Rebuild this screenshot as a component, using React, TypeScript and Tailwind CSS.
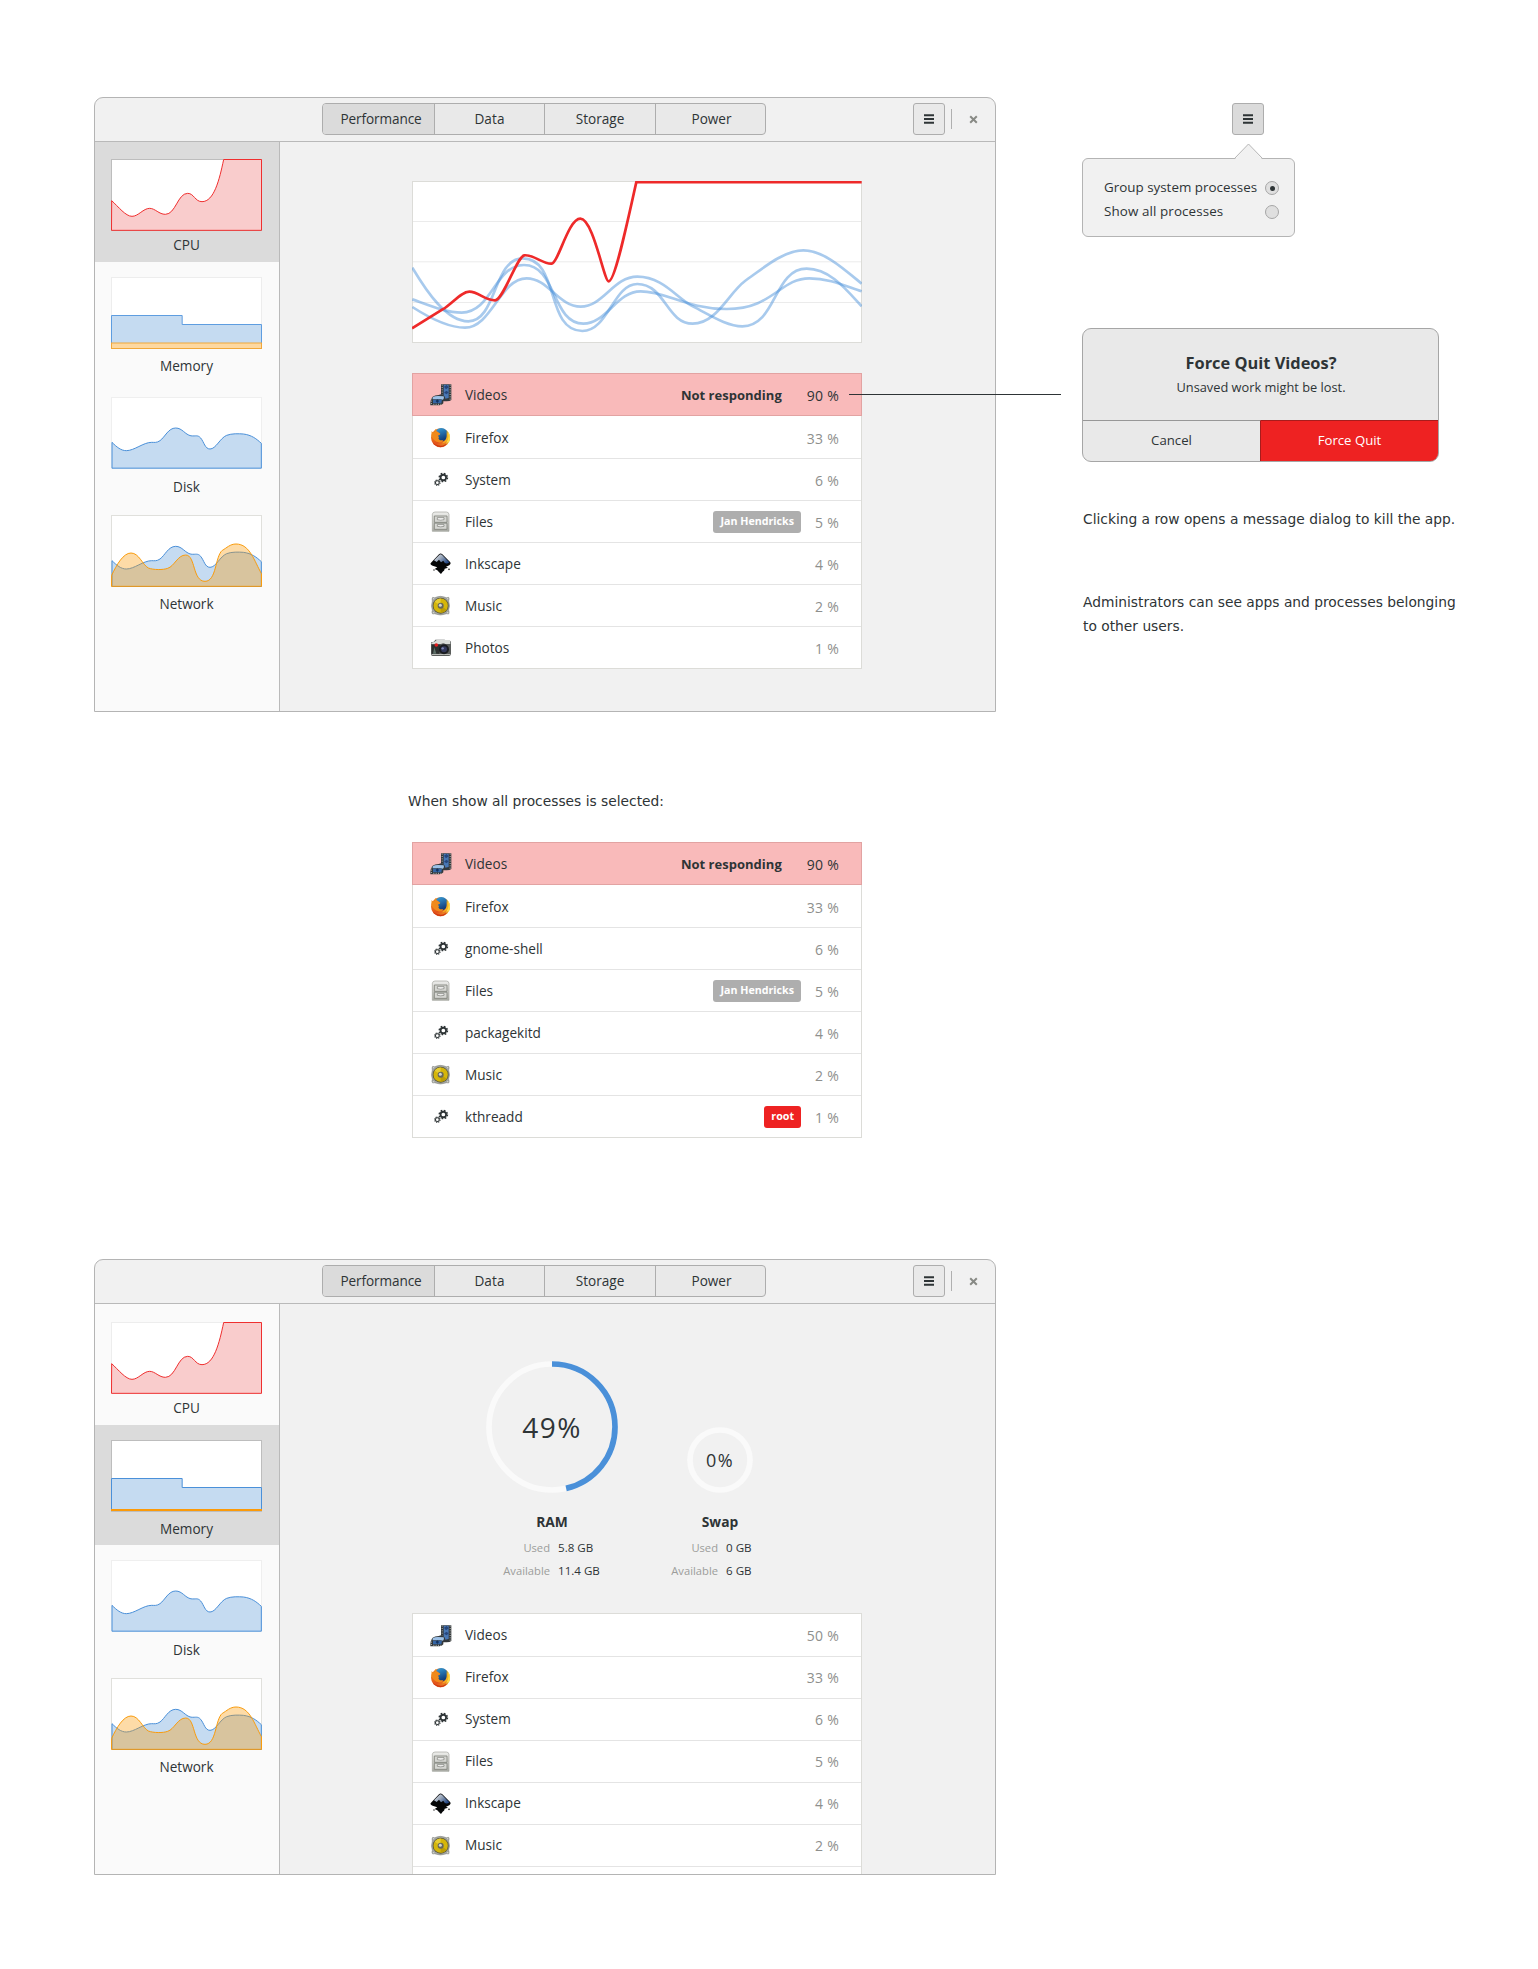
import type { ReactNode } from "react";

/* ---------- App icons (22px) ---------- */

function Icon({ children }: { children: ReactNode }) {
  return (
    <svg className="block h-[22px] w-[22px] shrink-0 overflow-visible" viewBox="0 0 66 66">
      {children}
    </svg>
  );
}

function VideosIcon() {
  return (
    <Icon>
      <path d="M33 1H64V48Q60 52 50 52H40V58Q36 64 28 64H1Q0 46 8 38Q14 33 26 33L33 31Z" fill="#33383b" />
      <path d="M41 2H56V42L46 44Q46 37 41 35Z" fill="#4877b4" />
      <path d="M42 8L50 3L56 10L48 16ZM42 26L49 20L56 25L50 31Z" fill="#26467c" />
      <path d="M36.5 2V31M60.5 2V48" stroke="#b9bdb6" strokeWidth="3" strokeDasharray="3 4" />
      <path d="M8 40Q14 36 24 36L41 37Q44 42 39 47L30 46H8Z" fill="#9cc0e6" />
      <path d="M9 47H36L34 58H9Z" fill="#3465a4" />
      <path d="M17 51L22 46L27 51L22 57Z" fill="#12315f" />
      <path d="M4 43V62M10 61H36" stroke="#b9bdb6" strokeWidth="3" strokeDasharray="3 4" />
    </Icon>
  );
}

function FirefoxIcon() {
  return (
    <Icon>
      <defs>
        <linearGradient id="fx-body" x1="0" y1="0" x2="1" y2="1">
          <stop offset="0" stopColor="#f08a1c" />
          <stop offset="0.55" stopColor="#e2521a" />
          <stop offset="1" stopColor="#f3b02a" />
        </linearGradient>
        <linearGradient id="fx-globe" x1="0" y1="0" x2="0.4" y2="1">
          <stop offset="0" stopColor="#3aa5e0" />
          <stop offset="1" stopColor="#123b77" />
        </linearGradient>
      </defs>
      <circle cx="31.5" cy="32" r="28.5" fill="url(#fx-body)" />
      <path d="M50 9Q64 24 59 42Q54 52 46 55Q56 38 50 9Z" fill="#fbdc4a" />
      <circle cx="34" cy="23" r="20" fill="url(#fx-globe)" />
      <path
        d="M5 12Q8 18 14 15Q13 9 17 6Q18 13 25 16L31 20Q31 23 25 25Q24 29 27 31Q23 35 28 38Q33 42 41 38Q36 48 25 46Q10 42 4 26Z"
        fill="#f08a1c"
      />
      <path d="M50 13Q59 24 54 38Q48 48 36 49Q49 40 50 28Z" fill="#f6b021" />
      <path d="M6 42Q14 56 32 56Q46 55 55 44Q48 60 31 60.500Q13 59 6 42Z" fill="#cf3715" />
    </Icon>
  );
}

function GearsIcon() {
  return (
    <Icon>
      <g fill="none" stroke="#2e3436">
        <circle cx="40" cy="25.500" r="8.300" strokeWidth="5.400" />
        <circle cx="40" cy="25.500" r="12.300" strokeWidth="4.500" strokeDasharray="5 4.660" />
        <circle cx="22" cy="41" r="5.700" strokeWidth="3.200" />
        <circle cx="22" cy="41" r="8" strokeWidth="3.400" strokeDasharray="3.300 2.983" />
      </g>
    </Icon>
  );
}

function FilesIcon() {
  return (
    <Icon>
      <defs>
        <linearGradient id="cabinet" x1="0" y1="0" x2="0" y2="1">
          <stop offset="0" stopColor="#eeeeec" />
          <stop offset="1" stopColor="#a9aba5" />
        </linearGradient>
      </defs>
      <path d="M7 61V10Q8 3 15 3H49Q56 3 57 10V61Z" fill="url(#cabinet)" stroke="#a0a29c" strokeWidth="2" />
      <g fill="#d6d7d3" stroke="#80827b" strokeWidth="2.500">
        <path d="M13 15H51V34H13ZM13 36.500H51V55H13Z" />
      </g>
      <path d="M22 20H42V26Q32 29 22 26ZM22 41H42V46Q32 49 22 46Z" fill="#fafafa" stroke="#74766f" strokeWidth="2" />
    </Icon>
  );
}

function InkscapeIcon() {
  return (
    <Icon>
      <defs>
        <linearGradient id="ink" x1="0" y1="0" x2="1" y2="0.600">
          <stop offset="0" stopColor="#e6eaf0" />
          <stop offset="0.500" stopColor="#9aa7ba" />
          <stop offset="1" stopColor="#274a86" />
        </linearGradient>
      </defs>
      <path
        d="M27 4Q32 -1 37 4L61 28Q64 33 58 37L48 41L54 44L44 47Q44 53 38 56L33 63L26 56Q24 51 14 48L22 43L8 38Q-2 34 3 29Z"
        fill="#050607"
      />
      <path d="M28.500 5.500Q32 2 35.500 5.500L58 28Q46 37 40 23L33 28L27 20L20 27L12 22Z" fill="url(#ink)" />
      <circle cx="57" cy="49" r="2.500" fill="#111" />
      <circle cx="12" cy="51" r="2" fill="#111" />
    </Icon>
  );
}

function MusicIcon() {
  return (
    <Icon>
      <path
        d="M8 7Q14 10 20 6Q31 2 43 6Q49 10 56 7Q59 11 56 18Q61 32 56 45Q59 53 56 57Q49 55 43 58Q31 62 20 58Q14 55 8 57Q4 53 7 46Q2 32 7 18Q5 11 8 7Z"
        fill="#a3a5a0"
        stroke="#7b7d78"
        strokeWidth="1.500"
      />
      <circle cx="32" cy="32" r="24" fill="#5b5a40" />
      <circle cx="32" cy="32" r="21.500" fill="#d5b60a" />
      <path d="M32 32L14 20Q22 10 32 10.500Z" fill="#e6cd30" />
      <path d="M32 32L50 44Q42 54 32 53.500Z" fill="#bb9c06" />
      <circle cx="32" cy="32" r="9" fill="#66675a" />
      <circle cx="31" cy="31" r="4.500" fill="#d3d7cf" />
      <g fill="#d8dad5">
        <circle cx="11" cy="11" r="2" />
        <circle cx="53" cy="11" r="2" />
        <circle cx="11" cy="53" r="2" />
        <circle cx="53" cy="53" r="2" />
      </g>
    </Icon>
  );
}

function PhotosIcon() {
  return (
    <Icon>
      <path d="M3 16L12 14L16 8H44L48 11H60Q63 12 63 18V52Q62 57 57 57H8Q3 57 3 52Z" fill="#5a5d5b" />
      <path d="M20 9H60L61 21H46Q40 17 33 21H4V17Q16 16 20 9Z" fill="#d9dbd7" />
      <path d="M5 23H32L28 50H5Z" fill="#2c302f" />
      <path d="M5 51H61V54H5Z" fill="#b8bab6" />
      <circle cx="42" cy="37" r="15" fill="#1a1c20" />
      <circle cx="42" cy="37" r="9" fill="#33395c" />
      <circle cx="38" cy="34" r="3.500" fill="#8087b5" />
      <circle cx="19" cy="24" r="5.500" fill="#e01c1c" />
      <path d="M13 31L19 50H9Z" fill="#5d6f68" />
    </Icon>
  );
}

/* ---------- Sidebar ---------- */

const diskCurve =
  "M81 188C95 202 108 213 124 213C148 213 175 188 200 188C208 188 215 190 225 183C240 172 250 145 272 145C292 145 300 165 318 168.500C333 170 338 165 347 175C357 187 360 208 375 208C393 208 405 175 425 167C440 161 462 162 475 163C500 166 515 178 529 191V265.500H81Z";

function Thumb({ frame, children }: { frame: string; children: ReactNode }) {
  return (
    <svg className="block h-[72px] w-[151px]" viewBox="0 0 453 216">
      <rect x="1.500" y="1.500" width="450" height="213" fill="#fff" stroke={frame} strokeWidth="3" />
      {children}
    </svg>
  );
}

function CpuThumb({ selected }: { selected: boolean }) {
  return (
    <Thumb frame={selected ? "#bdbdbd" : "#ededed"}>
      <path
        transform="translate(-78 -222)"
        d="M80 347C100 365 122 394 141 394C160 394 175 370 194 370C210 370 222 388 241 388C272 388 278 325 308 325C327 325 330 350 351 350C387 350 403 285 416 223.500H529.500V436H79.500Z"
        fill="#f9cccc"
        stroke="#ef2f2f"
        strokeWidth="3"
      />
    </Thumb>
  );
}

function MemoryThumb({ selected }: { selected: boolean }) {
  return (
    <Thumb frame={selected ? "#bdbdbd" : "#ededed"}>
      {selected ? (
        <>
          <path d="M1.500 210V115.500H213.500V142.500H451.500V210" fill="#c5dbf1" stroke="#4a90d9" strokeWidth="3" />
          <path d="M0 210H453" stroke="#fb9a09" strokeWidth="6" />
        </>
      ) : (
        <>
          <path d="M1.500 115.500H213.500V142.500H451.500V214.500H1.500Z" fill="#c5dbf1" stroke="#5e9de0" strokeWidth="3" />
          <rect x="1.500" y="198" width="450" height="16.500" fill="#fdd8a0" stroke="#f0a73a" strokeWidth="3" />
        </>
      )}
    </Thumb>
  );
}

function DiskThumb() {
  return (
    <Thumb frame="#efefef">
      <path transform="translate(-78 -52)" d={diskCurve} fill="#c5dbf1" stroke="#4a90d9" strokeWidth="3" />
    </Thumb>
  );
}

function NetworkThumb() {
  return (
    <Thumb frame="#e0e0dc">
      <path transform="translate(-78 -51)" d={diskCurve} fill="#c5dbf1" stroke="#4a90d9" strokeWidth="3" />
      <path
        transform="translate(-78 -406)"
        d="M80 587C95 555 115 520 138 520C162 520 172 555 190 565C205 571 235 571 248 566C268 560 278 526 302 526C332 526 322 605 360 605C395 605 390 530 412 512C425 505 435 493 453 493C495 493 508 545 529.500 582V620H79.500Z"
        fill="#f99b0c"
        fillOpacity="0.360"
        stroke="#f99b0c"
        strokeWidth="3"
      />
    </Thumb>
  );
}

function Sidebar({ selected }: { selected: "cpu" | "memory" }) {
  const bg = (on: boolean) => (on ? "bg-[#dbdbdb]" : "");
  return (
    <div
      className={`flex w-[185px] shrink-0 flex-col border-r border-[#bababa] bg-[#fafafa] text-[13.6px] leading-5 ${
        selected === "memory" ? "pt-px" : ""
      }`}
    >
      <div className={`flex h-[120px] flex-col items-center gap-1 pt-[17px] pr-px ${bg(selected === "cpu")}`}>
        <CpuThumb selected={selected === "cpu"} />
        <span>CPU</span>
      </div>
      <div className={`flex h-[120px] flex-col items-center gap-[7px] pt-[15px] pr-px ${bg(selected === "memory")}`}>
        <MemoryThumb selected={selected === "memory"} />
        <span>Memory</span>
      </div>
      <div className="flex h-[118px] flex-col items-center gap-2 pt-[15px] pr-px">
        <DiskThumb />
        <span>Disk</span>
      </div>
      <div className="flex flex-col items-center gap-[7px] pt-[15px] pr-px">
        <NetworkThumb />
        <span>Network</span>
      </div>
    </div>
  );
}

/* ---------- Window chrome ---------- */

function MenuButton({ pressed }: { pressed?: boolean }) {
  return (
    <button
      className={`flex h-8 w-8 shrink-0 items-center justify-center rounded-[3px] border border-[#adadad] ${
        pressed ? "bg-[#dbdbdb]" : "bg-[#e9e9e9]"
      }`}
    >
      <svg className="h-[10px] w-[10px]" viewBox="0 0 10 10">
        <path d="M0 1.200H10M0 5H10M0 8.800H10" stroke="#2e3436" strokeWidth="2" />
      </svg>
    </button>
  );
}

function Window({ height, selected, children }: { height: string; selected: "cpu" | "memory"; children: ReactNode }) {
  return (
    <div
      className={`flex w-[902px] flex-col overflow-hidden rounded-t-[9px] border border-[#b4b4b4] bg-[#f1f1f1] ${height}`}
    >
      <div className="flex h-11 shrink-0 items-start border-b border-[#b9b9b9] pt-[5px] pl-[227px]">
        <div className="flex h-8 w-[444px] overflow-hidden rounded-[4px] border border-[#adadad] bg-[#e9e9e9] pt-px text-[13.6px]">
          <div className="-mt-px flex w-[112px] items-center justify-center border-r border-[#adadad] bg-[#dbdbdb] pt-px pl-[5px] tracking-[-0.1px]">
            Performance
          </div>
          <div className="-mt-px flex w-[110px] items-center justify-center border-r border-[#adadad] pt-px tracking-[0.1px]">
            Data
          </div>
          <div className="-mt-px flex w-[111px] items-center justify-center border-r border-[#adadad] pt-px">Storage</div>
          <div className="-mt-px flex flex-1 items-center justify-center pt-px pl-0.5">Power</div>
        </div>
        <div className="ml-[147px] flex items-center">
          <MenuButton />
          <div className="ml-1.5 h-5 w-px bg-[#b0b0b0]" />
          <svg className="ml-[17px] h-[9px] w-[9px]" viewBox="0 0 9 9">
            <path d="M1.200 1.200L7.800 7.800M7.800 1.200L1.200 7.800" stroke="#888a85" strokeWidth="2" />
          </svg>
        </div>
      </div>
      <div className="flex min-h-0 flex-1">
        <Sidebar selected={selected} />
        <div className="flex min-w-0 flex-1 flex-col overflow-hidden">{children}</div>
      </div>
    </div>
  );
}

/* ---------- Process list ---------- */

type Row = {
  icon: () => ReactNode;
  name: string;
  load: string;
  tag?: string;
  tagStyle?: string;
  alert?: boolean;
};

const row = (icon: () => ReactNode, name: string, load: string, extra: Partial<Row> = {}): Row => ({
  icon,
  name,
  load,
  ...extra,
});

const jan = { tag: "Jan Hendricks", tagStyle: "bg-[#aeaeae]" };

const grouped: Row[] = [
  row(VideosIcon, "Videos", "90 %", { alert: true }),
  row(FirefoxIcon, "Firefox", "33 %"),
  row(GearsIcon, "System", "6 %"),
  row(FilesIcon, "Files", "5 %", jan),
  row(InkscapeIcon, "Inkscape", "4 %"),
  row(MusicIcon, "Music", "2 %"),
  row(PhotosIcon, "Photos", "1 %"),
];

const all: Row[] = [
  row(VideosIcon, "Videos", "90 %", { alert: true }),
  row(FirefoxIcon, "Firefox", "33 %"),
  row(GearsIcon, "gnome-shell", "6 %"),
  row(FilesIcon, "Files", "5 %", jan),
  row(GearsIcon, "packagekitd", "4 %"),
  row(MusicIcon, "Music", "2 %"),
  row(GearsIcon, "kthreadd", "1 %", { tag: "root", tagStyle: "bg-[#ee2222]" }),
];

const memory: Row[] = [
  row(VideosIcon, "Videos", "50 %"),
  row(FirefoxIcon, "Firefox", "33 %"),
  row(GearsIcon, "System", "6 %"),
  row(FilesIcon, "Files", "5 %"),
  row(InkscapeIcon, "Inkscape", "4 %"),
  row(MusicIcon, "Music", "2 %"),
];

function ProcessList({ rows, open }: { rows: Row[]; open?: boolean }) {
  const nudge = open ? "" : "pt-0.5";
  return (
    <div className="w-[450px] shrink-0 border border-[#dcdcd8] bg-white text-[13.6px]">
      {rows.map((r, i) => (
        <div
          key={r.name}
          className={
            r.alert
              ? "-mx-px -mt-px flex h-[43px] items-center border border-[#e2a3a2] bg-[#f9baba] pr-[22px] pl-[17px]"
              : `flex h-[42px] items-center pr-[22px] pl-[17px] ${
                  i === 0 || rows[i - 1].alert ? "border-t border-transparent" : "border-t border-[#e4e4e4]"
                }`
          }
        >
          {r.icon()}
          <span className={`ml-[13px] flex-1 ${nudge}`}>{r.name}</span>
          {r.alert && (
            <span className={`mr-[25px] text-[13px] font-bold tracking-[0.02px] ${nudge}`}>Not responding</span>
          )}
          {r.tag && (
            <span
              className={`mr-[14px] flex h-[22px] items-center rounded-[3px] px-[7px] text-[10.7px] font-bold text-white ${r.tagStyle}`}
            >
              {r.tag}
            </span>
          )}
          <span className={`text-[14px] tracking-[0.25px] ${nudge} ${r.alert ? "" : "text-[#8e8f8d]"}`}>{r.load}</span>
        </div>
      ))}
      {open && <div className="h-[42px] border-t border-[#e4e4e4]" />}
    </div>
  );
}

/* ---------- Charts ---------- */

function CpuChart() {
  return (
    <svg className="block h-[162px] w-[450px] shrink-0" viewBox="36 48 1350 486">
      <rect x="37.500" y="49.500" width="1347" height="483" fill="#fff" stroke="#dcdcd8" strokeWidth="3" />
      <path d="M39 169.500H1383M39 290.500H1383M39 412.500H1383" stroke="#ebebeb" strokeWidth="3" />
      <g fill="none" stroke="#4a90d9" strokeOpacity="0.480" strokeWidth="8">
        <path d="M37 308C80 380 140 469 205 469C290 469 280 280 368 280C480 280 435 498 547 498C625 498 640 357 712 357C795 357 800 476 878 476C950 476 985 385 1035 348C1085 313 1150 256 1210 256C1270 256 1330 310 1385 356" />
        <path d="M37 403C90 422 140 443 185 443C275 443 285 300 372 300C470 300 455 476 550 476C620 476 650 379 722 379C800 379 860 432 980 432C1120 432 1140 340 1228 340C1290 340 1340 365 1385 379" />
        <path d="M37 426C90 460 145 488 195 488C275 488 300 340 380 340C445 340 475 425 542 425C610 425 640 335 712 335C790 335 830 400 880 425C930 450 980 484 1027 484C1130 484 1120 311 1220 311C1290 311 1340 375 1385 424" />
      </g>
      <path
        d="M36 490L130 432C160 412 185 380 208 380C235 380 255 406 285 406C310 406 350 275 373 271C400 268 430 298 455 296C475 294 505 161 541 161C580 161 612 349 626 349C645 349 680 180 709 51.500H1385"
        fill="none"
        stroke="#ee2a2a"
        strokeWidth="8"
      />
    </svg>
  );
}

type GaugeProps = {
  size: string;
  r: number;
  arc?: boolean;
  value: string;
  valueStyle: string;
  name: string;
  used: string;
  available: string;
};

function Gauge({ size, r, arc, value, valueStyle, name, used, available }: GaugeProps) {
  const box = r * 2 + 6;
  const c = box / 2;
  return (
    <div className="flex w-[168px] flex-col items-center">
      <div className={`grid place-items-center ${size}`}>
        <svg className="col-start-1 row-start-1 h-full w-full" viewBox={`0 0 ${box} ${box}`}>
          <circle cx={c} cy={c} r={r} fill="none" stroke="#fafafa" strokeWidth="5.700" />
          {arc && (
            <circle
              cx={c}
              cy={c}
              r={r}
              fill="none"
              stroke="#4a90d9"
              strokeWidth="5.700"
              pathLength="360"
              strokeDasharray="167 193"
              transform={`rotate(-90 ${c} ${c})`}
            />
          )}
        </svg>
        <span className={`col-start-1 row-start-1 ${valueStyle}`}>{value}</span>
      </div>
      <div className="mt-[19px] text-[13.8px] leading-5 font-bold">{name}</div>
      <div className="mt-1 grid w-full grid-cols-2 text-[11.2px] leading-[23px]">
        <span className="pr-[2px] text-right text-[#9c9d9b]">Used</span>
        <span className="pl-[6px] text-[11.6px]">{used}</span>
        <span className="pr-[2px] text-right text-[#9c9d9b]">Available</span>
        <span className="pl-[6px] text-[11.6px]">{available}</span>
      </div>
    </div>
  );
}

/* ---------- Popover and dialog ---------- */

function Radio({ on }: { on?: boolean }) {
  return (
    <span className="flex h-[14px] w-[14px] items-center justify-center rounded-full border border-[#a6a6a6] bg-[#dfdfdf]">
      {on && <span className="h-[5px] w-[5px] rounded-full bg-[#2e3436]" />}
    </span>
  );
}

function Popover() {
  return (
    <div className="relative mt-[23px] h-[79px] w-[213px] rounded-[6px] border border-[#b4b4b4] bg-[#f1f1f1] pt-[17px] pr-[15px] pl-[21px] text-[13.4px]">
      <svg className="absolute -top-[16px] left-[150px] h-[17px] w-[32px]" viewBox="0 0 32 17">
        <path d="M1 17L15.500 1.500L30 17Z" fill="#f1f1f1" />
        <path d="M0.500 15.500H1.500L15.500 1L29.500 15.500H30.500" fill="none" stroke="#b4b4b4" />
      </svg>
      <div className="flex h-6 items-center justify-between">
        <span className="pb-0.5">Group system processes</span>
        <Radio on />
      </div>
      <div className="flex h-6 items-center justify-between">
        <span className="pb-0.5 tracking-[0.1px]">Show all processes</span>
        <Radio />
      </div>
    </div>
  );
}

function ForceQuitDialog() {
  return (
    <div className="mt-[91px] flex h-[134px] w-[357px] flex-col overflow-hidden rounded-[9px] border border-[#a6a6a6] bg-[#e9e9e9]">
      <div className="flex h-[91px] flex-col items-center pt-[22px] pl-px">
        <div className="text-[16.4px] leading-6 font-bold">Force Quit Videos?</div>
        <div className="text-[12.8px] leading-6">Unsaved work might be lost.</div>
      </div>
      <div className="flex flex-1 text-[13.2px]">
        <div className="flex w-[177px] items-center justify-center border-t border-[#979797]">Cancel</div>
        <div className="-mr-px -mb-px flex flex-1 items-center justify-center rounded-br-[9px] border border-[#a81c1c] bg-[#ee2222] text-white">
          Force Quit
        </div>
      </div>
    </div>
  );
}

/* ---------- Page ---------- */

export default function App() {
  return (
    <div className="relative flex h-[1969px] w-[1538px] overflow-hidden bg-white pl-[94px] font-['Open_Sans','Noto_Sans',sans-serif] text-[#2e3436]">
      <div className="flex w-[902px] shrink-0 flex-col pt-[97px]">
        <Window height="h-[615px]" selected="cpu">
          <div className="flex flex-col gap-[30px] pt-[39px] pl-[132px]">
            <CpuChart />
            <ProcessList rows={grouped} />
          </div>
        </Window>

        <p className="mt-[77px] ml-[314px] font-['DejaVu_Sans',sans-serif] text-[13.8px] leading-6">
          When show all processes is selected:
        </p>
        <div className="mt-[29px] ml-[318px] flex">
          <ProcessList rows={all} />
        </div>

        <div className="mt-[121px]">
          <Window height="h-[616px]" selected="memory">
            <div className="flex h-[309px] shrink-0 items-end pb-[31px] pl-[188px]">
              <Gauge
                size="h-[132px] w-[132px]"
                r={63}
                arc
                value="49%"
                valueStyle="text-[28px] tracking-[1.5px]"
                name="RAM"
                used="5.8 GB"
                available="11.4 GB"
              />
              <Gauge
                size="h-[66px] w-[66px]"
                r={30}
                value="0%"
                valueStyle="text-[18px] tracking-[1.5px]"
                name="Swap"
                used="0 GB"
                available="6 GB"
              />
            </div>
            <div className="flex items-start pl-[132px]">
              <ProcessList rows={memory} open />
            </div>
          </Window>
        </div>
      </div>

      <div className="ml-[86px] flex w-[400px] flex-col pt-[103px]">
        <div className="pl-[150px]">
          <MenuButton pressed />
        </div>
        <Popover />
        <ForceQuitDialog />
        <p className="mt-[45px] ml-px font-['DejaVu_Sans',sans-serif] text-[13.8px] leading-6">
          Clicking a row opens a message dialog to kill the app.
        </p>
        <p className="mt-[59px] ml-px font-['DejaVu_Sans',sans-serif] text-[13.8px] leading-6">
          Administrators can see apps and processes belonging
          <br />
          to other users.
        </p>
      </div>

      {/* Callout from the unresponsive row to its dialog */}
      <div className="absolute top-[394px] left-[849px] h-px w-[212px] bg-[#2e3436]" />
    </div>
  );
}
